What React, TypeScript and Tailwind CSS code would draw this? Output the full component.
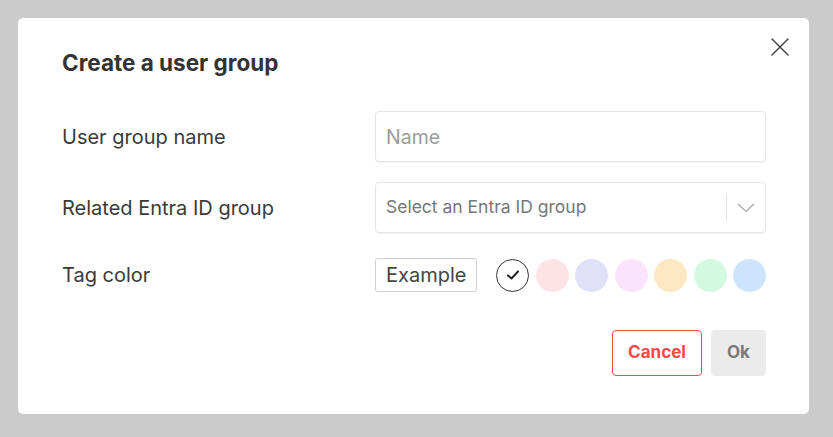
import { useState } from "react";

// Tag colour swatches, first one is the "none" choice
const swatches = ["#ffffff", "#fee3e6", "#e1e0f9", "#fbe3fd", "#fee8c3", "#d3f9e1", "#cde5fc"];

function CloseIcon() {
  return (
    <svg width="20" height="20" viewBox="0 0 20 20" fill="none" stroke="#444" strokeWidth="1.5" strokeLinecap="round">
      <path d="M2 2 L18 18 M18 2 L2 18" />
    </svg>
  );
}

function Chevron() {
  return (
    <svg width="18" height="10" viewBox="0 0 18 10" fill="none" stroke="#a8a8a8" strokeWidth="1.2">
      <path d="M1 1 L9 8.5 L17 1" />
    </svg>
  );
}

function Check() {
  return (
    <svg width="14" height="12" viewBox="0 0 14 12" fill="none" stroke="#222" strokeWidth="2" strokeLinecap="round" strokeLinejoin="round">
      <path d="M2 6.5 L5.5 9.5 L12 2.5" />
    </svg>
  );
}

export default function App() {
  const [selected, setSelected] = useState(0);

  return (
    <div className="h-[437px] w-[833px] bg-[#cbcbcb] p-[18px] font-['Inter',sans-serif]">
      <div className="relative h-[396px] w-[791px] rounded-[5px] bg-white pl-[44px] pr-[43px] pt-[30px]">
        <button className="absolute right-[19px] top-[19px]">
          <CloseIcon />
        </button>

        <h2 className="text-[22.5px] font-bold leading-[30px] text-[#333]">Create a user group</h2>

        <div className="mt-[33px] grid grid-cols-[313px_1fr] items-center text-[20px] text-[#3a3a3a]">
          <label>User group name</label>
          <input
            className="h-[51px] rounded-[4px] border border-[#e6e6e6] px-[10px] text-[19.5px] text-[#333] shadow-[0_1px_2px_rgba(0,0,0,0.06)] outline-none placeholder:text-[#9b9b9b]"
            placeholder="Name"
          />
        </div>

        <div className="mt-[20px] grid grid-cols-[313px_1fr] items-center text-[20px] text-[#3a3a3a]">
          <label>Related Entra ID group</label>
          <div className="flex h-[51px] items-center rounded-[4px] border border-[#e6e6e6] pl-[10px] shadow-[0_1px_2px_rgba(0,0,0,0.06)]">
            <span className="flex-1 text-[17.5px] text-[#777]">Select an Entra ID group</span>
            <span className="h-[27px] w-px bg-[#e2e2e2]" />
            <span className="flex w-[38px] justify-center">
              <Chevron />
            </span>
          </div>
        </div>

        <div className="mt-[25px] grid grid-cols-[313px_1fr] items-center text-[20px] text-[#3a3a3a]">
          <label>Tag color</label>
          <div className="flex items-center">
            <span className="flex h-[34px] items-center rounded-[3px] border border-[#cfcfcf] px-[10px] text-[20px] text-[#444]">
              Example
            </span>
            <div className="ml-[19px] flex gap-[6.5px]">
              {swatches.map((c, i) => (
                <button
                  key={c}
                  onClick={() => setSelected(i)}
                  className={
                    "flex h-[33px] w-[33px] items-center justify-center rounded-full " +
                    (selected === i ? "border border-[#333]" : "")
                  }
                  style={{ backgroundColor: c }}
                >
                  {selected === i && <Check />}
                </button>
              ))}
            </div>
          </div>
        </div>

        <div className="mt-[38px] flex justify-end gap-[9px]">
          <button className="h-[46px] w-[90px] rounded-[4px] border border-[#f44a4a] text-[17px] font-bold text-[#f44a4a]">
            Cancel
          </button>
          <button className="h-[46px] w-[55px] rounded-[4px] bg-[#ebebeb] text-[17px] font-bold text-[#7a7a7a]">
            Ok
          </button>
        </div>
      </div>
    </div>
  );
}
